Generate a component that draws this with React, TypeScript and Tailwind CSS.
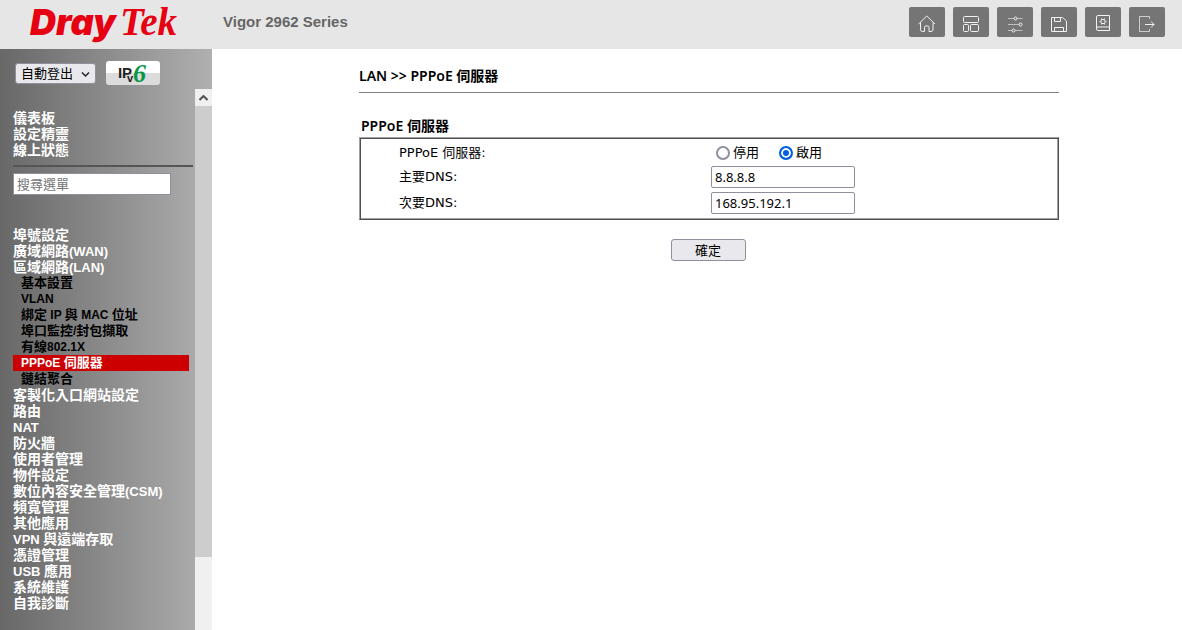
import { Fragment, useState, type ReactNode } from "react";

const sans = "font-['Liberation_Sans','Noto_Sans_CJK_TC',sans-serif]";

/** Sets Latin runs one pixel smaller than the Chinese text around them. */
function Mixed({ text, latin }: { text: string; latin: string }) {
  const parts = text.split(/([\x20-\x7e]+)/).filter(Boolean);
  return (
    <>
      {parts.map((part, i) =>
        /^[\x20-\x7e]/.test(part) ? (
          <span key={i} className={latin}>
            {part}
          </span>
        ) : (
          <Fragment key={i}>{part}</Fragment>
        )
      )}
    </>
  );
}

const toolbar: { label: string; icon: ReactNode }[] = [
  {
    label: "首頁",
    icon: <path d="M1.500 10 9.800 2l8.200 8M3.500 8.500v7q0 2 2 2h2v-4q0-1.500 1.200-1.500h2.100q1.200 0 1.200 1.500v4h2q2 0 2-2v-7" />,
  },
  {
    label: "儀表板",
    icon: (
      <>
        <rect x="2.500" y="2.500" width="15" height="6" rx="1" />
        <rect x="2.500" y="10.500" width="5" height="7" rx="1" />
        <rect x="9.500" y="10.500" width="8" height="7" rx="1" />
      </>
    ),
  },
  {
    label: "設定",
    icon: (
      <>
        <path d="M3 4.500h6M12 4.500h5.500M3 10.500h11M3 16.500h4M10 16.500h7.500" opacity=".6" />
        <circle cx="10.500" cy="4.500" r="1.500" />
        <circle cx="15.500" cy="10.500" r="1.500" />
        <circle cx="8.500" cy="16.500" r="1.500" />
      </>
    ),
  },
  {
    label: "儲存",
    icon: (
      <>
        <path d="M2.500 3.500h11l4 3.500v10.500h-15z" />
        <path d="M5.500 3.500v4h6v-4M5.500 17.500v-4h9v4" />
      </>
    ),
  },
  {
    label: "手冊",
    icon: (
      <>
        <path d="M16.500 16.500H5q-1.500 0-1.500-1.500V3Q3.500 1.500 5 1.500h11.500zM3.500 14.500q0-1.500 1.500-1.500h11.500" />
        <circle cx="10" cy="7.500" r="2.200" />
        <path d="M8.500 4.500v1.200M11.500 4.500v1.200M8.500 9.300v1.200M11.500 9.300v1.200M6.500 7.500h1.200M12.300 7.500h1.200" />
      </>
    ),
  },
  {
    label: "登出",
    icon: (
      <>
        <path d="M12.500 5V2.500h-10v15h10V15" opacity=".7" />
        <path d="M8 10.500h9M14 7.500l3 3-3 3" />
      </>
    ),
  },
];

const topMenu = ["儀表板", "設定精靈", "線上狀態"];

const menu: { text: string; children?: string[] }[] = [
  { text: "埠號設定" },
  { text: "廣域網路(WAN)" },
  {
    text: "區域網路(LAN)",
    children: ["基本設置", "VLAN", "綁定 IP 與 MAC 位址", "埠口監控/封包擷取", "有線802.1X", "PPPoE 伺服器", "鏈結聚合"],
  },
  { text: "客製化入口網站設定" },
  { text: "路由" },
  { text: "NAT" },
  { text: "防火牆" },
  { text: "使用者管理" },
  { text: "物件設定" },
  { text: "數位內容安全管理(CSM)" },
  { text: "頻寬管理" },
  { text: "其他應用" },
  { text: "VPN 與遠端存取" },
  { text: "憑證管理" },
  { text: "USB 應用" },
  { text: "系統維護" },
  { text: "自我診斷" },
];

function Header() {
  return (
    <header className="flex h-[49px] items-start justify-between bg-[#e6e6e6] pr-[17px]">
      <div className="flex items-center">
        <a href="#home" aria-label="DrayTek" className="flex h-11 w-[193px] items-baseline gap-1 pl-[30px] leading-[44px] text-[#e60012]">
          <span className="font-['Inter',sans-serif] text-[36px] font-black italic">Dray</span>
          <span className="font-['Liberation_Serif',serif] text-[39px] font-bold italic">Tek</span>
        </a>
        <h1 className="pl-[30px] text-[15px] font-bold text-[#666]">Vigor 2962 Series</h1>
      </div>
      <div className="flex gap-2 pt-[7px]">
        {toolbar.map(({ label, icon }) => (
          <button key={label} aria-label={label} className="flex h-[30px] w-9 items-center justify-center rounded-xs bg-[#757575] pt-1">
            <svg width="20" height="20" viewBox="0 0 20 20" fill="none" stroke="#f2f2f2">
              {icon}
            </svg>
          </button>
        ))}
      </div>
    </header>
  );
}

function Sidebar() {
  return (
    <aside className="flex w-[212px] shrink-0 flex-col bg-linear-to-r from-[#686868] to-[#b0b0b0]">
      <div className="flex h-10 items-center gap-[10px] pt-2 pl-[15px]">
        <div className="relative">
          <select
            aria-label="自動登出"
            className="block h-[21px] w-[81px] appearance-none rounded-[3px] border border-[#8f8f9d] bg-[#e9e9ed] pl-[5px] text-[13px] leading-[19px] text-black"
          >
            <option>自動登出</option>
          </select>
          <svg className="pointer-events-none absolute top-2 right-[6px]" width="9" height="7" viewBox="0 0 9 7" fill="none" stroke="#222" strokeWidth="1.500">
            <path d="m1 1.500 3.500 3.500L8 1.500" />
          </svg>
        </div>
        <a
          href="#ipv6"
          aria-label="IPv6"
          className="flex h-6 w-[54px] items-center justify-center rounded-[3px] bg-linear-to-b from-white from-50% to-[#dcdcdc] to-50%"
        >
          <svg width="30" height="24" viewBox="0 0 30 24" className="overflow-visible">
            <text x="0" y="17" fontFamily="Liberation Sans" fontSize="15" fontWeight="bold" fill="#222">I</text>
            <text x="4" y="17" fontFamily="Liberation Sans" fontSize="15" fontWeight="bold" fill="#222">P</text>
            <text x="9" y="21" fontFamily="Liberation Sans" fontSize="11" fontWeight="bold" fill="#222">v</text>
            <text x="15" y="21" fontFamily="Liberation Serif" fontSize="26" fontWeight="bold" fontStyle="italic" fill="#0a9648">6</text>
          </svg>
        </a>
      </div>
      <div className="flex grow">
        <nav className="grow pt-[21px] pl-[13px] text-[14px] leading-4 font-bold text-white">
          <ul>
            {topMenu.map((text) => (
              <li key={text}>
                <a href="#menu">{text}</a>
              </li>
            ))}
          </ul>
          <hr className="mt-[7px] mr-[2px] border-t-2 border-[#555]" />
          <input
            type="text"
            aria-label="搜尋選單"
            placeholder="搜尋選單"
            className="mt-[6px] block h-[22px] w-[158px] border border-[#8f8f9d] bg-white px-[3px] text-[13px] font-normal text-black placeholder:text-[#757575]"
          />
          <ul className="mt-8">
            {menu.map(({ text, children }) => (
              <li key={text}>
                <a href="#menu" className="block h-4">
                  <Mixed text={text} latin="text-[13px]" />
                </a>
                {children && (
                  <ul className="mr-[6px] text-[13px] text-black">
                    {children.map((child) => (
                      <li key={child}>
                        <a
                          href="#menu"
                          className={child === "PPPoE 伺服器" ? "block h-4 bg-[#cc0000] pl-2 text-white" : "block h-4 pl-2"}
                        >
                          <Mixed text={child} latin="text-[12px]" />
                        </a>
                      </li>
                    ))}
                  </ul>
                )}
              </li>
            ))}
          </ul>
        </nav>
        <div className="flex w-[17px] shrink-0 flex-col bg-[#f0f0f0]">
          <div className="flex h-[17px] items-center justify-center">
            <svg width="9" height="6" viewBox="0 0 9 6" fill="none" stroke="#505050" strokeWidth="2">
              <path d="m.5 5 4-4 4 4" />
            </svg>
          </div>
          <div className="h-[451px] bg-[#cdcdcd]" />
        </div>
      </div>
    </aside>
  );
}

const fieldClass =
  "h-[22px] w-36 rounded-xs border border-[#8f8f9d] bg-white px-[3px] font-['Noto_Sans',sans-serif] text-[13px] text-black";

function ServerForm() {
  const [enabled, setEnabled] = useState(true);
  const [primary, setPrimary] = useState("8.8.8.8");
  const [secondary, setSecondary] = useState("168.95.192.1");
  const radio =
    "size-[14px] appearance-none rounded-full border-2 border-[#8f8f9d] bg-white checked:border-[#0060df] checked:bg-[#0060df] checked:shadow-[inset_0_0_0_2px_white]";
  return (
    <main className="grow pt-[18px] pl-[147px] font-['Noto_Sans','Noto_Sans_CJK_TC',sans-serif] text-black">
      <div className="max-w-[700px]">
        <h2 className="h-[26px] border-b border-[#808080] text-[14px] leading-[18px] font-semibold">LAN &gt;&gt; PPPoE 伺服器</h2>
        <h3 className="mt-6 h-5 pl-[2px] text-[14px] leading-[18px] font-semibold">PPPoE 伺服器</h3>
        <form onSubmit={(e) => e.preventDefault()}>
          <div className="grid grid-cols-[312px_1fr] items-center border border-t-[#a0a0a0] border-r-[#505050] border-b-[#505050] border-l-[#a0a0a0] py-[3px] pl-[39px] font-['DejaVu_Sans','Noto_Sans_CJK_TC',sans-serif] text-[13px] shadow-[inset_1px_1px_#505050,inset_-1px_-1px_#a0a0a0]">
            <span>PPPoE 伺服器:</span>
            <div role="radiogroup" aria-label="PPPoE 伺服器" className="flex h-[23px] items-center gap-5 pl-[5px]">
              <label className="flex items-center gap-[3px]">
                <input type="radio" name="server" className={radio} checked={!enabled} onChange={() => setEnabled(false)} />
                停用
              </label>
              <label className="flex items-center gap-[3px]">
                <input type="radio" name="server" className={radio} checked={enabled} onChange={() => setEnabled(true)} />
                啟用
              </label>
            </div>
            <label htmlFor="dns1">主要DNS:</label>
            <div className="flex h-[26px] items-center">
              <input id="dns1" type="text" className={fieldClass} value={primary} onChange={(e) => setPrimary(e.target.value)} />
            </div>
            <label htmlFor="dns2">次要DNS:</label>
            <div className="flex h-[26px] items-center">
              <input id="dns2" type="text" className={fieldClass} value={secondary} onChange={(e) => setSecondary(e.target.value)} />
            </div>
          </div>
          <div className="flex justify-center pt-[19px] pr-[2px]">
            <button type="submit" className="h-[22px] w-[75px] rounded-[3px] border border-[#8f8f9d] bg-[#e9e9ed] text-[13px] leading-5">
              確定
            </button>
          </div>
        </form>
      </div>
    </main>
  );
}

export default function App() {
  return (
    <div className={`flex min-h-screen flex-col bg-white ${sans}`}>
      <Header />
      <div className="flex grow">
        <Sidebar />
        <ServerForm />
      </div>
    </div>
  );
}
